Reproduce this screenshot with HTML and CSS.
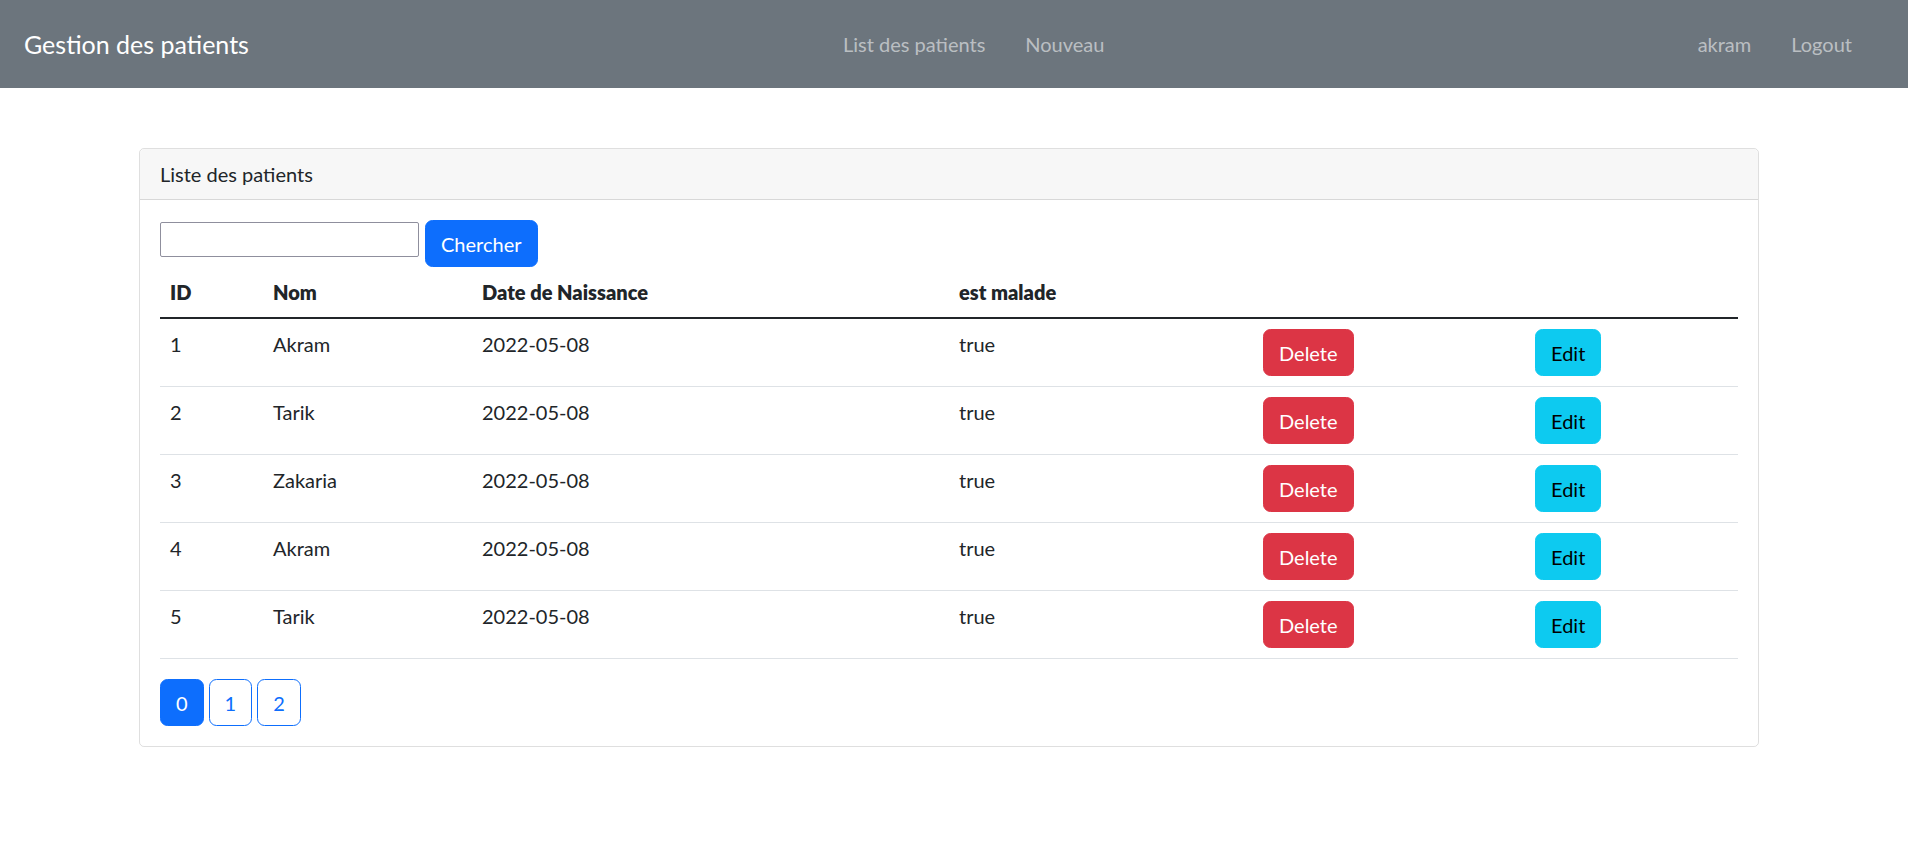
FILE: index.html
```html
<!DOCTYPE html>
<html lang="fr">
<head>
<meta charset="utf-8">
<title>Gestion des patients</title>
<link rel="stylesheet" href="styles.css">
</head>
<body>
<nav class="navbar">
  <a class="brand" href="#">Gestion des patients</a>
  <ul class="nav">
    <li><a href="#">List des patients</a></li>
    <li><a href="#">Nouveau</a></li>
  </ul>
  <ul class="nav nav-right">
    <li><a href="#">akram</a></li>
    <li><a href="#">Logout</a></li>
  </ul>
</nav>
<main class="container">
  <section class="card">
    <div class="card-header">Liste des patients</div>
    <div class="card-body">
      <form class="search">
        <input type="text" class="search-input">
        <button type="button" class="btn btn-primary">Chercher</button>
      </form>
      <table class="table">
        <thead>
          <tr><th class="c-id">ID</th><th class="c-nom">Nom</th><th class="c-date">Date de Naissance</th><th class="c-mal">est malade</th><th class="c-del"></th><th class="c-edit"></th></tr>
        </thead>
        <tbody>
          <tr><td>1</td><td>Akram</td><td>2022-05-08</td><td>true</td><td><a class="btn btn-danger">Delete</a></td><td><a class="btn btn-info">Edit</a></td></tr>
          <tr><td>2</td><td>Tarik</td><td>2022-05-08</td><td>true</td><td><a class="btn btn-danger">Delete</a></td><td><a class="btn btn-info">Edit</a></td></tr>
          <tr><td>3</td><td>Zakaria</td><td>2022-05-08</td><td>true</td><td><a class="btn btn-danger">Delete</a></td><td><a class="btn btn-info">Edit</a></td></tr>
          <tr><td>4</td><td>Akram</td><td>2022-05-08</td><td>true</td><td><a class="btn btn-danger">Delete</a></td><td><a class="btn btn-info">Edit</a></td></tr>
          <tr><td>5</td><td>Tarik</td><td>2022-05-08</td><td>true</td><td><a class="btn btn-danger">Delete</a></td><td><a class="btn btn-info">Edit</a></td></tr>
        </tbody>
      </table>
      <ul class="pagination">
        <li><a class="btn btn-primary">0</a></li>
        <li><a class="btn btn-outline">1</a></li>
        <li><a class="btn btn-outline">2</a></li>
      </ul>
    </div>
  </section>
</main>
</body>
</html>
```
FILE: styles.css
```css
* { box-sizing: border-box; }
html, body { margin: 0; padding: 0; }
body {
  font-family: Lato, "Noto Sans", sans-serif;
  font-size: 20px;
  line-height: 30px;
  color: #212529;
  background: #fff;
}
a { text-decoration: none; }

.navbar {
  height: 88px;
  background: #6c757d;
  display: grid;
  grid-template-columns: 799px auto 1fr;
  align-items: center;
  padding: 0 36px 0 24px;
}
.brand {
  color: #fff;
  font-size: 25px;
  line-height: 38px;
}
.nav {
  list-style: none;
  margin: 0;
  padding: 0;
  display: flex;
}
.nav a {
  display: block;
  padding: 10px 20px;
  color: rgba(255, 255, 255, 0.55);
}
.nav-right { justify-content: flex-end; }

.container {
  width: 1620px;
  margin: 60px 0 0 139px;
}
.card {
  border: 1px solid rgba(0, 0, 0, 0.125);
  border-radius: 5px;
}
.card-header {
  background: rgba(0, 0, 0, 0.03);
  border-bottom: 1px solid rgba(0, 0, 0, 0.125);
  padding: 10px 20px;
  border-radius: 5px 5px 0 0;
}
.card-body { padding: 20px; }

.search {
  display: flex;
  align-items: flex-start;
  gap: 6px;
}
.search-input {
  width: 259px;
  height: 35px;
  margin-top: 2px;
  border: 1px solid #8f8f9d;
  border-radius: 2px;
  font: inherit;
}

.btn {
  display: inline-block;
  font: inherit;
  font-size: 20px;
  line-height: 30px;
  padding: 7.5px 15px;
  border: 1.25px solid transparent;
  border-radius: 7.5px;
  cursor: pointer;
}
.btn-primary { background: #0d6efd; border-color: #0d6efd; color: #fff; }
.btn-danger { background: #dc3545; border-color: #dc3545; color: #fff; }
.btn-info { background: #0dcaf0; border-color: #0dcaf0; color: #000; }
.btn-outline { background: #fff; border-color: #0d6efd; color: #0d6efd; }

.table {
  width: 100%;
  border-collapse: collapse;
  table-layout: fixed;
  margin-bottom: 20px;
}
.table th, .table td {
  padding: 10px;
  text-align: left;
  vertical-align: top;
  border-bottom: 1px solid #dee2e6;
}
.table th {
  font-weight: 800;
  border-bottom: 2.5px solid #212529;
}
.c-id { width: 103px; }
.c-nom { width: 209px; }
.c-date { width: 477px; }
.c-mal { width: 304px; }
.c-del { width: 272px; }

.pagination {
  list-style: none;
  margin: 0;
  padding: 0;
  display: flex;
  gap: 5px;
}
```
